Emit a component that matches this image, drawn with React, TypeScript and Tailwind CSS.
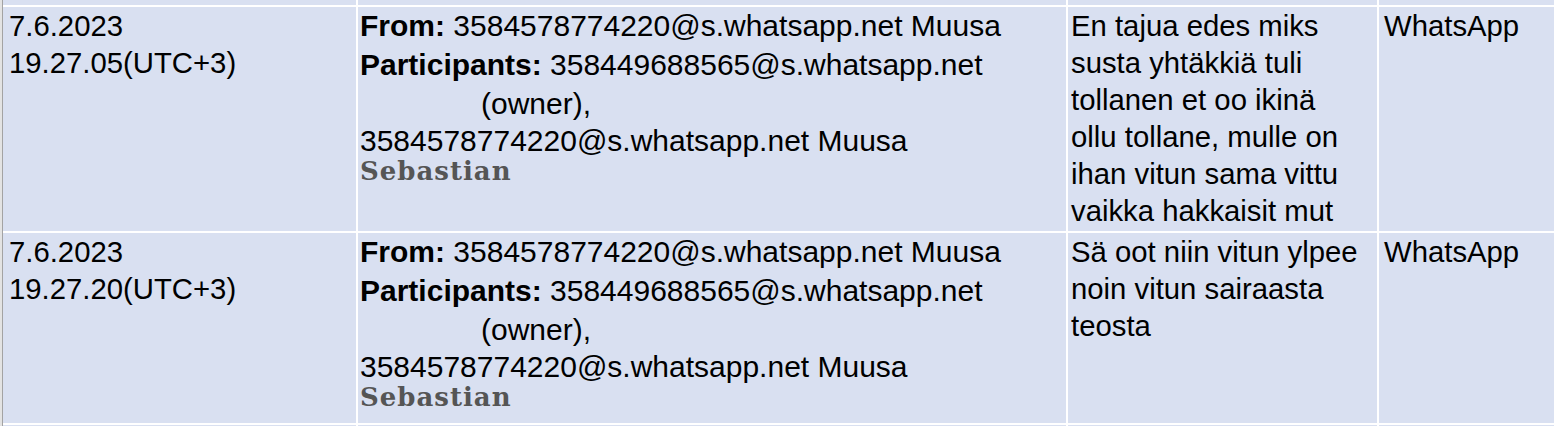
import React from "react";

const sans = { fontFamily: '"Liberation Sans", Arial, sans-serif' };

function DateCell({ date, time }: { date: string; time: string }) {
  return (
    <div className="bg-[#d9e0f1] overflow-hidden pl-[6px] text-[29.3px] leading-[37px] text-black">
      <div>{date}</div>
      <div>{time}</div>
    </div>
  );
}

function PartiesCell() {
  return (
    <div className="bg-[#d9e0f1] overflow-hidden pl-[2px] text-[30px] text-black whitespace-nowrap">
      <div className="h-[38px] leading-[38px]">
        <span className="font-bold">From:</span> 3584578774220@s.whatsapp.net Muusa
      </div>
      <div className="h-[39px] leading-[39px]">
        <span className="font-bold">Participants:</span> 358449688565@s.whatsapp.net
      </div>
      <div className="h-[40px] leading-[40px] pl-[121px]">(owner),</div>
      <div className="h-[34px] leading-[34px]">3584578774220@s.whatsapp.net Muusa</div>
      <div
        className="h-[26px] leading-[26px] text-[26px] font-bold tracking-[1px] text-[#555555]"
        style={{ fontFamily: '"DejaVu Serif", serif' }}
      >
        Sebastian
      </div>
    </div>
  );
}

function MessageCell({ lines }: { lines: string[] }) {
  return (
    <div className="bg-[#d9e0f1] overflow-hidden pl-[3px] text-[29.3px] leading-[37px] text-black whitespace-nowrap">
      {lines.map((l, i) => (
        <div key={i}>{l}</div>
      ))}
    </div>
  );
}

function SourceCell() {
  return (
    <div className="bg-[#d9e0f1] overflow-hidden pl-[5px] text-[29.3px] leading-[37px] text-black">
      WhatsApp
    </div>
  );
}

const Blank = () => <div className="bg-[#d9e0f1]" />;

export default function App() {
  return (
    <div className="w-[1554px] h-[426px] overflow-hidden flex bg-white" style={sans}>
      <div className="w-[2px] h-full bg-[#e3e3e3]" />
      <div className="w-px h-full bg-[#a3a3a3]" />
      <div className="flex-1 grid grid-cols-[353px_708px_309px_1fr] grid-rows-[5px_224px_190px_1px] gap-[2px] bg-white">
        <Blank />
        <Blank />
        <Blank />
        <Blank />

        <DateCell date="7.6.2023" time="19.27.05(UTC+3)" />
        <PartiesCell />
        <MessageCell
          lines={[
            "En tajua edes miks",
            "susta yhtäkkiä tuli",
            "tollanen et oo ikinä",
            "ollu tollane, mulle on",
            "ihan vitun sama vittu",
            "vaikka hakkaisit mut",
          ]}
        />
        <SourceCell />

        <DateCell date="7.6.2023" time="19.27.20(UTC+3)" />
        <PartiesCell />
        <MessageCell lines={["Sä oot niin vitun ylpee", "noin vitun sairaasta", "teosta"]} />
        <SourceCell />

        <Blank />
        <Blank />
        <Blank />
        <Blank />
      </div>
    </div>
  );
}
